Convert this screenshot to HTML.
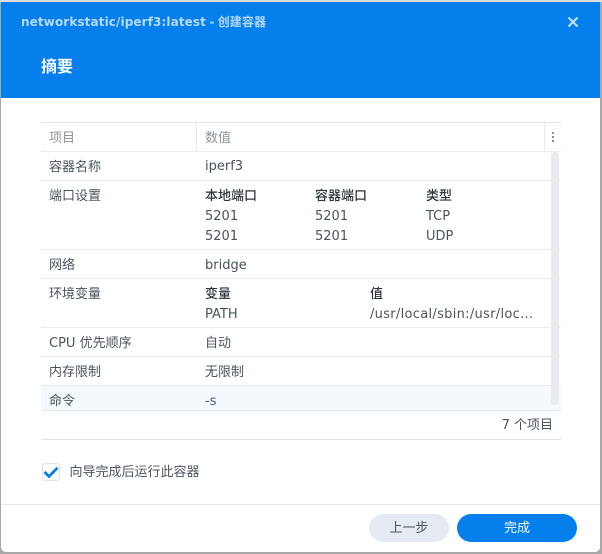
<!DOCTYPE html>
<html><head><meta charset="utf-8">
<style>
html,body{margin:0;padding:0}
body{width:602px;height:554px;overflow:hidden;background:#a8a8a8;position:relative;font-family:"DejaVu Sans","Noto Sans CJK SC",sans-serif;font-size:13px;color:#4a545f}
.abs,.t,.l{position:absolute}
.t{white-space:nowrap;line-height:18px;height:18px;font-size:13px}
.b{font-weight:500;color:#2c343c}
.l{left:41px;width:520px;height:1px;background:#e6ebf1}
</style></head><body>
<div class="abs" style="left:0;top:0;width:602px;height:2px;background:#dedede"></div>
<div class="abs" style="left:1px;top:2px;width:599px;height:550px;background:#fff;border-radius:0 0 5px 5px;overflow:hidden">
<div class="abs" style="left:0;top:0;width:599px;height:96px;background:#057fec"></div>
</div>
<div class="t" style="left:21px;top:13px;font-weight:bold;color:#b5d9fa;font-size:12px;letter-spacing:.11px;word-spacing:-1px">networkstatic/iperf3:latest - 创建容器</div>
<svg class="abs" style="left:567px;top:16px" width="12" height="12" viewBox="0 0 12 12"><path d="M1.5 1.5L10.5 10.5M10.5 1.5L1.5 10.5" stroke="#bfdffb" stroke-width="2.2" fill="none"/></svg>
<div class="t" style="left:41px;top:57px;font-size:16px;line-height:20px;height:20px;color:#fff;font-weight:bold">摘要</div>

<div class="l" style="top:122px;background:#d9e4ee"></div>
<div class="l" style="top:151px"></div>
<div class="l" style="top:180px"></div>
<div class="l" style="top:249px"></div>
<div class="l" style="top:278px"></div>
<div class="l" style="top:327px"></div>
<div class="l" style="top:356px"></div>
<div class="abs" style="left:41px;top:385px;width:520px;height:25px;background:#f4f9fd"></div>
<div class="l" style="top:385px"></div>
<div class="l" style="top:410px"></div>
<div class="l" style="top:439px;background:#dfe4e9"></div>
<div class="abs" style="left:196px;top:123px;width:1px;height:28px;background:#e6ebf1"></div>
<div class="abs" style="left:544px;top:123px;width:1px;height:28px;background:#e6ebf1"></div>
<div class="abs" style="left:552px;top:132px;width:2px;height:2px;background:#8a8f96"></div>
<div class="abs" style="left:552px;top:136px;width:2px;height:2px;background:#8a8f96"></div>
<div class="abs" style="left:552px;top:140px;width:2px;height:2px;background:#8a8f96"></div>
<div class="abs" style="left:551px;top:152px;width:8px;height:253px;background:#e9ebee;border-radius:4px"></div>

<div class="t" style="left:49px;top:130px;color:#8f969d">项目</div>
<div class="t" style="left:205px;top:130px;color:#8f969d">数值</div>

<div class="t" style="left:49px;top:159px">容器名称</div>
<div class="t" style="left:205px;top:158px">iperf3</div>

<div class="t" style="left:49px;top:188px">端口设置</div>
<div class="t b" style="left:205px;top:188px">本地端口</div>
<div class="t b" style="left:315px;top:188px">容器端口</div>
<div class="t b" style="left:426px;top:188px">类型</div>
<div class="t" style="left:205px;top:208px">5201</div>
<div class="t" style="left:315px;top:208px">5201</div>
<div class="t" style="left:426px;top:208px">TCP</div>
<div class="t" style="left:205px;top:228px">5201</div>
<div class="t" style="left:315px;top:228px">5201</div>
<div class="t" style="left:426px;top:228px">UDP</div>

<div class="t" style="left:49px;top:257px">网络</div>
<div class="t" style="left:205px;top:257px">bridge</div>

<div class="t" style="left:49px;top:286px">环境变量</div>
<div class="t b" style="left:205px;top:286px">变量</div>
<div class="t b" style="left:370px;top:286px">值</div>
<div class="t" style="left:205px;top:306px">PATH</div>
<div class="t" style="left:370px;top:306px;letter-spacing:.3px">/usr/local/sbin:/usr/loc...</div>

<div class="t" style="left:49px;top:335px">CPU 优先顺序</div>
<div class="t" style="left:205px;top:335px">自动</div>

<div class="t" style="left:49px;top:364px">内存限制</div>
<div class="t" style="left:205px;top:364px">无限制</div>

<div class="t" style="left:49px;top:393px">命令</div>
<div class="t" style="left:205px;top:393px">-s</div>

<div class="t" style="right:49px;top:417px">7 个项目</div>

<div class="abs" style="left:42px;top:463px;width:16px;height:16px;border:1px solid #d9e4ee;border-radius:3px;background:#fff"></div>
<svg class="abs" style="left:42px;top:463px" width="18" height="18" viewBox="0 0 18 18"><path d="M2.5 9L7 13.4L15.5 4.8" stroke="#057fec" stroke-width="2.8" fill="none"/></svg>
<div class="t" style="left:69.5px;top:464px">向导完成后运行此容器</div>

<div class="abs" style="left:1px;top:504px;width:599px;height:1px;background:#e3e7ec"></div>
<div class="abs" style="left:369px;top:514px;width:80px;height:28px;border-radius:14px;background:#e6ebf3;text-align:center;line-height:30px;font-size:13px">上一步</div>
<div class="abs" style="left:457px;top:514px;width:120px;height:28px;border-radius:14px;background:#057fec;color:#fff;text-align:center;line-height:30px;font-size:13px">完成</div>
</body></html>
